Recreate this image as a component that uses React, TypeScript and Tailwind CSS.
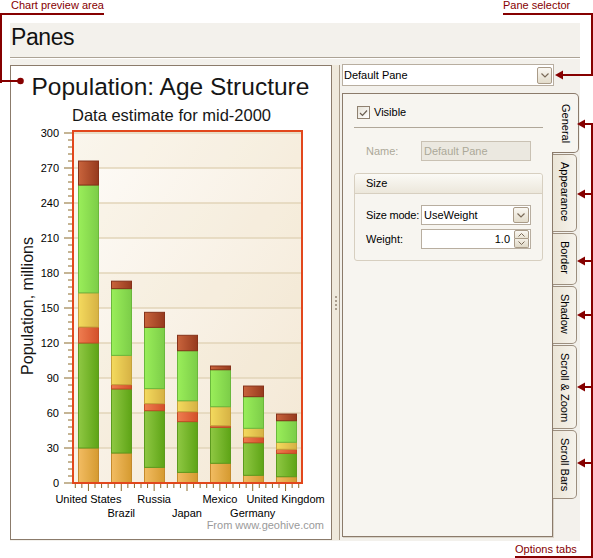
import React from "react"

const RED = "#860000"

type Bar = { name: string; row: number; v: number[] }

const bars: Bar[] = [
  { name: "United States", row: 0, v: [30, 90, 13.7, 29.3, 92.4, 20.6] },
  { name: "Brazil", row: 1, v: [25.7, 54.9, 3.7, 25.1, 57.2, 6.4] },
  { name: "Russia", row: 0, v: [13.4, 48.6, 6, 12.9, 52.5, 12.9] },
  { name: "Japan", row: 1, v: [9.1, 43.5, 8.5, 9.4, 42.9, 13.2] },
  { name: "Mexico", row: 0, v: [16.9, 30.8, 1.4, 16.3, 31.7, 3.2] },
  { name: "Germany", row: 1, v: [6.6, 27.9, 4.9, 7.5, 27.1, 9.1] },
  { name: "United Kingdom", row: 0, v: [5.4, 20, 3.5, 6, 18.5, 5.7] },
]

const series = [
  { id: "s0", from: "#f2bc62", to: "#d59a30", line: "#c48a2c" },
  { id: "s1", from: "#8fc843", to: "#5ea416", line: "#5c9a1e" },
  { id: "s2", from: "#ef7d50", to: "#d3502a", line: "#c24a26" },
  { id: "s3", from: "#f4da5e", to: "#d6b244", line: "#c6a33c" },
  { id: "s4", from: "#9aee5a", to: "#7ccd48", line: "#6ab83c" },
  { id: "s5", from: "#c9643c", to: "#963a1e", line: "#86321a" },
]

const tabs = [
  { label: "General", cls: "h-[60px] w-[27px] pt-[10px] bg-[#f7f5f0] border-[#8b7b6b]" },
  { label: "Appearance", cls: "h-[78px] w-[24px] ml-px pt-[7px] bg-linear-to-r from-[#ebe5d7] to-[#f6f3ec] border-[#9c8e7e]" },
  { label: "Border", cls: "h-[52px] w-[24px] ml-px pt-[7px] bg-linear-to-r from-[#ebe5d7] to-[#f6f3ec] border-[#9c8e7e]" },
  { label: "Shadow", cls: "h-[58px] w-[24px] ml-px pt-[7px] bg-linear-to-r from-[#ebe5d7] to-[#f6f3ec] border-[#9c8e7e]" },
  { label: "Scroll & Zoom", cls: "h-[84px] w-[24px] ml-px pt-[7px] bg-linear-to-r from-[#ebe5d7] to-[#f6f3ec] border-[#9c8e7e]" },
  { label: "Scroll Bars", cls: "h-[69px] w-[24px] ml-px pt-[7px] bg-linear-to-r from-[#ebe5d7] to-[#f6f3ec] border-[#9c8e7e]" },
]

const arrowYs = [124, 194, 261, 315, 387, 463]

function Chart() {
  const y = (v: number) => 483 - (v * 350) / 300
  const cw = 230 / 7
  const majors = Array.from({ length: 11 }, (_, i) => i * 30)
  const minors = Array.from({ length: 51 }, (_, i) => i * 6).filter((v) => v % 30 !== 0)
  const xticks = Array.from({ length: 35 }, (_, i) => ({
    x: 72 + cw * (Math.floor(i / 5) + ((i % 5) + 0.5) / 5),
    major: i % 5 === 2,
  }))

  return (
    <svg width={320} height={473} viewBox="11 66 320 473" className="block" fontFamily="'Liberation Sans', Arial, sans-serif">
      <defs>
        <linearGradient id="plotBg" x1="0" y1="0" x2="1" y2="1">
          <stop offset="0" stopColor="#fefcf9" />
          <stop offset="1" stopColor="#f3e7d3" />
        </linearGradient>
        {series.map((s) => (
          <linearGradient key={s.id} id={s.id} x1="0" y1="0" x2="1" y2="0">
            <stop offset="0" stopColor={s.from} />
            <stop offset="1" stopColor={s.to} />
          </linearGradient>
        ))}
      </defs>

      <text x={31.5} y={95} fontSize={24.5} fill="#161616">Population: Age Structure</text>
      <text x={72} y={121} fontSize={16.5} fill="#161616">Data estimate for mid-2000</text>

      <rect x={73} y={131} width={229} height={352} fill="url(#plotBg)" />
      {[1, 3, 5, 7, 9].map((k) => (
        <rect key={k} x={73} y={y((k + 1) * 30)} width={229} height={35} fill="#efe2c8" opacity={0.25} />
      ))}
      {majors.slice(1).map((v) => (
        <line key={v} x1={73} x2={302} y1={y(v)} y2={y(v)} stroke="#e2d5b9" strokeWidth={1.5} />
      ))}

      {bars.map((b, i) => {
        const cx = 72 + cw * (i + 0.5)
        const x = Math.round(cx - 10) + 0.5
        let acc = 0
        return (
          <g key={b.name}>
            {b.v.map((val, j) => {
              const top = y(acc + val)
              const bottom = y(acc)
              acc += val
              return (
                <rect
                  key={j}
                  x={x}
                  y={top}
                  width={20}
                  height={bottom - top}
                  fill={`url(#${series[j].id})`}
                  stroke={series[j].line}
                  strokeWidth={1}
                />
              )
            })}
          </g>
        )
      })}

      <rect x={73} y={131} width={229} height={352} fill="none" stroke="#e2471c" strokeWidth={2} />

      {majors.map((v) => (
        <g key={v}>
          <line x1={64} x2={72} y1={y(v)} y2={y(v)} stroke="#8b6a2a" strokeWidth={1} />
          <text x={59} y={y(v) + 4} fontSize={11} textAnchor="end" fill="#000">{v}</text>
        </g>
      ))}
      {minors.map((v) => (
        <line key={v} x1={68} x2={72} y1={y(v)} y2={y(v)} stroke="#8b6a2a" strokeWidth={1} />
      ))}
      {xticks.map((t, i) => (
        <line key={i} x1={t.x} x2={t.x} y1={484} y2={t.major ? 491 : 488} stroke="#8b6a2a" strokeWidth={1} />
      ))}
      {bars.map((b, i) => (
        <text key={b.name} x={72 + cw * (i + 0.5)} y={b.row ? 516.5 : 503} fontSize={11} textAnchor="middle" fill="#000">
          {b.name}
        </text>
      ))}

      <text x={33} y={306} fontSize={16} textAnchor="middle" fill="#161616" transform="rotate(-90 33 306)">
        Population, millions
      </text>
      <text x={324} y={528.5} fontSize={11} textAnchor="end" fill="#9a9a9a">From www.geohive.com</text>
    </svg>
  )
}

function DropButton({ className }: { className: string }) {
  return (
    <div className={"shrink-0 flex items-center justify-center rounded-[2px] border border-[#a99b88] bg-linear-to-b from-[#faf8f3] to-[#e3dccb] " + className}>
      <svg width="8" height="5" viewBox="0 0 8 5">
        <path d="M0.5 0.5 L4 4 L7.5 0.5" fill="none" stroke="#7a6a58" strokeWidth="1.2" />
      </svg>
    </div>
  )
}

function SpinButtons() {
  return (
    <div className="shrink-0 flex flex-col w-[15px] h-[18px] mr-px">
      <div className="h-[9px] flex items-center justify-center rounded-t-[2px] border border-[#a99b88] bg-linear-to-b from-[#faf8f3] to-[#e8e2d3]">
        <svg width="7" height="4" viewBox="0 0 7 4">
          <path d="M0.5 3.5 L3.5 0.5 L6.5 3.5" fill="none" stroke="#7a6a58" strokeWidth="1" />
        </svg>
      </div>
      <div className="h-[9px] flex items-center justify-center rounded-b-[2px] border border-t-0 border-[#a99b88] bg-linear-to-b from-[#f3efe6] to-[#e0d9c8]">
        <svg width="7" height="4" viewBox="0 0 7 4">
          <path d="M0.5 0.5 L3.5 3.5 L6.5 0.5" fill="none" stroke="#7a6a58" strokeWidth="1" />
        </svg>
      </div>
    </div>
  )
}

export default function App() {
  return (
    <div className="relative w-[593px] h-[558px] bg-white overflow-hidden pl-[10px] pt-[23px] font-['Liberation_Sans',Arial,sans-serif] text-[11px] text-black">
      <div className="w-[570px] h-[518px] bg-[#f3f1ec] flex flex-col">
        <div className="h-[35px] shrink-0 border-b border-[#aca396] pl-px text-[23px] leading-[28px] tracking-[-0.4px] text-[#111]">
          Panes
        </div>
        <div className="h-px shrink-0 bg-white" />

        <div className="flex items-start">
          {/* chart preview */}
          <div className="mt-[6px] w-[322px] h-[475px] border border-[#8b7b6b] bg-white">
            <Chart />
          </div>

          {/* splitter */}
          <div className="mt-[6px] h-[475px] w-[10px] flex">
            <div className="w-[7px] h-full bg-[#efe9dc] flex flex-col items-center justify-center gap-[2px]">
              <div className="w-[2px] h-[2px] bg-[#a99d8d]" />
              <div className="w-[2px] h-[2px] bg-[#a99d8d]" />
              <div className="w-[2px] h-[2px] bg-[#a99d8d]" />
              <div className="w-[2px] h-[2px] bg-[#a99d8d]" />
            </div>
            <div className="w-px h-full bg-[#a89b8a]" />
          </div>

          {/* options */}
          <div className="flex flex-col">
            <div className="mt-[5px] w-[212px] h-[22px] border border-[#b8aea0] bg-white flex items-center pr-[1px]">
              <span className="flex-1 pl-[1px]">Default Pane</span>
              <DropButton className="w-[15px] h-[17px]" />
            </div>

            <div className="mt-[7px] flex">
              <div className="w-[211px] h-[444px] border border-[#8b7b6b] bg-[#f7f5f0] shadow-[1px_1px_0_#d9d3c7] pt-[12px] pl-[11px] pr-[9px]">
                <div className="flex items-center h-[13px] pl-[3px] gap-[4px]">
                  <div className="w-[13px] h-[13px] border border-[#8f8170] bg-linear-to-br from-[#e6e2d7] to-white flex items-center justify-center">
                    <svg width="9" height="8" viewBox="0 0 9 8">
                      <path d="M1 4 L3.5 6.5 L8 1.5" fill="none" stroke="#6b5f52" strokeWidth="1.2" />
                    </svg>
                  </div>
                  <span>Visible</span>
                </div>
                <div className="mt-[8px] h-px bg-[#b0a799]" />

                <div className="mt-[13px] flex items-center h-[20px] pl-[12px]">
                  <span className="w-[55px] shrink-0 whitespace-nowrap text-[#aca899]">Name:</span>
                  <div className="w-[110px] shrink-0 h-[20px] border border-[#c9c1b3] bg-[#ebe8e0] flex items-center pl-[2px] text-[#aca899]">
                    Default Pane
                  </div>
                </div>

                <div className="mt-[12px] border border-[#d7cfc0] rounded-[3px]">
                  <div className="h-[20px] border-b border-[#d7cfc0] bg-linear-to-b from-[#fbfaf6] to-[#ece7db] flex items-center pl-[11px] rounded-t-[3px]">
                    Size
                  </div>
                  <div className="pt-[11px] pb-[11px] flex flex-col gap-[4px]">
                    <div className="flex items-center h-[20px] pl-[11px]">
                      <span className="w-[55px] shrink-0 whitespace-nowrap tracking-[-0.2px]">Size mode:</span>
                      <div className="w-[110px] shrink-0 h-[20px] border border-[#b8aea0] bg-white flex items-center pl-[2px] pr-px">
                        <span className="flex-1">UseWeight</span>
                        <DropButton className="w-[16px] h-[16px]" />
                      </div>
                    </div>
                    <div className="flex items-center h-[20px] pl-[11px]">
                      <span className="w-[55px] shrink-0 whitespace-nowrap">Weight:</span>
                      <div className="w-[110px] shrink-0 h-[20px] border border-[#b8aea0] bg-white flex items-center">
                        <span className="flex-1 text-right pr-[4px]">1.0</span>
                        <SpinButtons />
                      </div>
                    </div>
                  </div>
                </div>
              </div>

              <div className="-ml-px flex flex-col gap-px">
                {tabs.map((t) => (
                  <div key={t.label} className={"border-y border-r rounded-r-[5px] flex justify-center " + t.cls}>
                    <span className="[writing-mode:vertical-rl] leading-[13px] whitespace-nowrap">{t.label}</span>
                  </div>
                ))}
              </div>
            </div>
          </div>
        </div>
      </div>

      {/* callouts */}
      <span className="absolute left-[11px] top-[-1px] leading-[13px] text-[#860000]">Chart preview area</span>
      <span className="absolute left-[503px] top-[-1px] leading-[13px] text-[#860000]">Pane selector</span>
      <span className="absolute left-[515px] top-[543px] leading-[13px] text-[#860000]">Options tabs</span>
      <svg className="absolute left-0 top-0 pointer-events-none" width={593} height={558}>
        <rect x={0} y={13} width={104} height={2} fill={RED} />
        <rect x={0} y={13} width={2} height={70} fill={RED} />
        <rect x={0} y={80} width={18} height={2} fill={RED} />
        <circle cx={20.5} cy={81} r={3.3} fill={RED} />

        <rect x={503} y={13} width={90} height={2} fill={RED} />
        <rect x={591} y={13} width={2} height={63} fill={RED} />
        <rect x={562} y={74} width={31} height={2} fill={RED} />
        <polygon points="555,75 563,70.5 563,79.5" fill={RED} />

        <rect x={515} y={556} width={78} height={2} fill={RED} />
        <rect x={591} y={123} width={2} height={435} fill={RED} />
        {arrowYs.map((ay) => (
          <g key={ay}>
            <rect x={584} y={ay - 1} width={8} height={2} fill={RED} />
            <polygon points={`577,${ay} 585,${ay - 4.5} 585,${ay + 4.5}`} fill={RED} />
          </g>
        ))}
      </svg>
    </div>
  )
}
